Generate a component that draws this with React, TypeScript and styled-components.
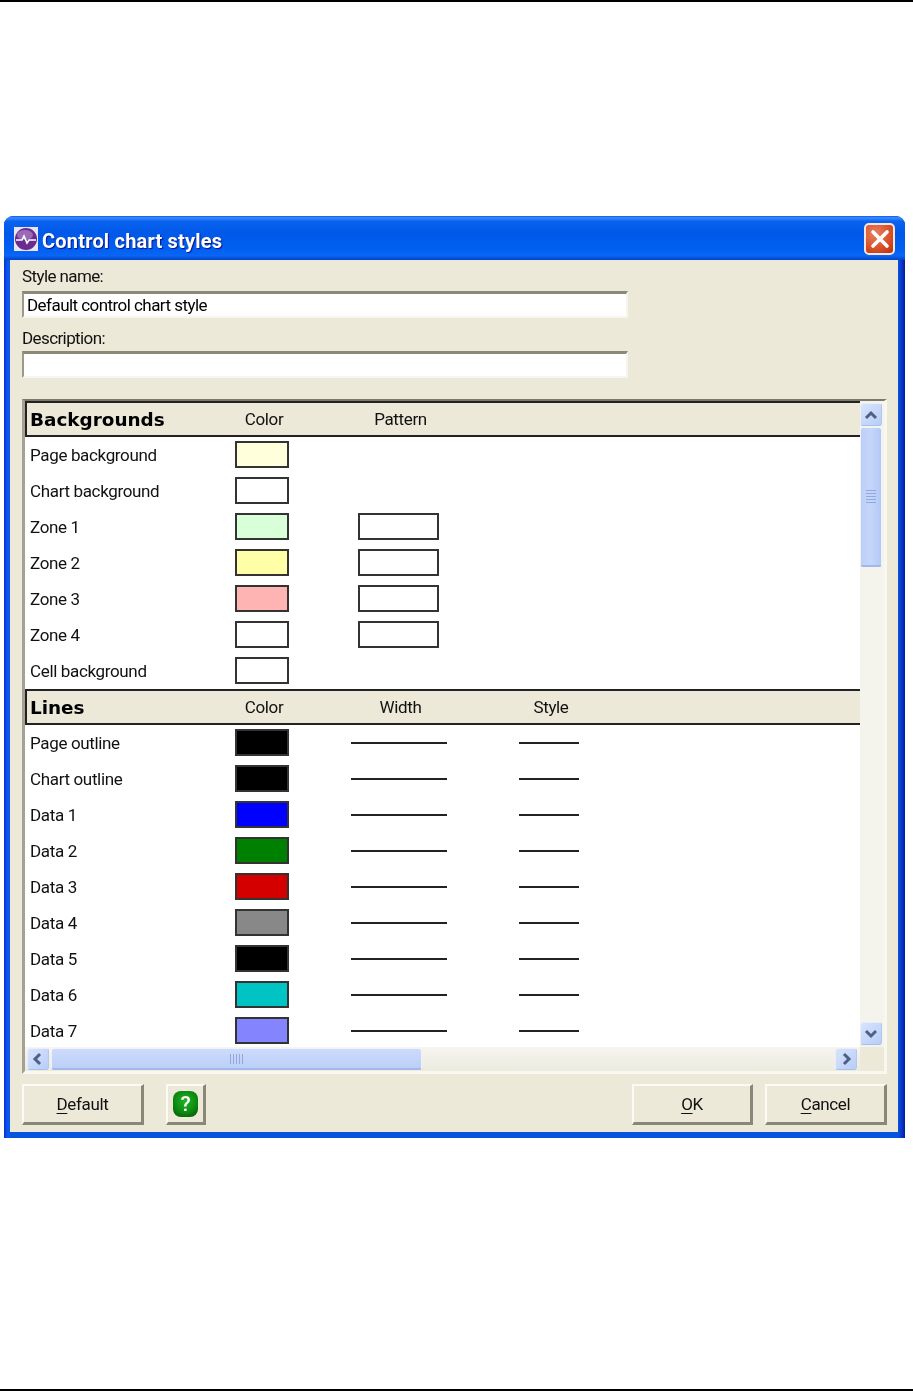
import React from "react";
import styled, { createGlobalStyle } from "styled-components";

const Global = createGlobalStyle`
  html, body { margin: 0; padding: 0; background: #fff; }
  * { box-sizing: border-box; }
`;

const Page = styled.div`
  width: 913px;
  height: 1391px;
  border-top: 2px solid #000;
  border-bottom: 2px solid #000;
  padding: 214px 8px 0 4px;
  font-family: Roboto, "Liberation Sans", Arial, sans-serif;
  letter-spacing: -0.35px;
`;

const Win = styled.div`
  width: 901px;
  height: 922px;
  border-radius: 9px 9px 0 0;
  display: flex;
  flex-direction: column;
  filter: blur(0.45px);
  background: linear-gradient(90deg, #0831d9 0, #0a5cf0 4px, #0855dd 6px, #0855dd calc(100% - 7px), #0a3bd0 calc(100% - 4px), #001ea0 100%);
`;

const TitleBar = styled.div`
  height: 44px;
  flex: none;
  display: flex;
  align-items: center;
  padding: 0 10px 0 10px;
  border-radius: 9px 9px 0 0;
  background: linear-gradient(180deg, #0a5ae8 0, #3c8cff 4%, #0a62f0 12%, #0058e8 40%, #0060f2 75%, #0a66f4 90%, #0044c8 100%);
`;

const AppIcon = styled.svg`
  width: 24px;
  height: 24px;
  flex: none;
  margin: 2px 4px 0 0;
`;

const Title = styled.div`
  flex: 1;
  color: #fff;
  font-weight: 700;
  font-size: 20px;
  padding-top: 6px;
  letter-spacing: 0.2px;
  text-shadow: 1px 1px 1px #0f1089;
  font-family: Roboto, "Liberation Sans", Arial, sans-serif;
`;

const CloseBtn = styled.div`
  width: 31px;
  height: 32px;
  margin-top: 2px;
  border: 2px solid #f4e6e0;
  border-radius: 5px;
  background: radial-gradient(circle at 35% 30%, #e8805e 0, #d9532c 55%, #b8300c 100%);
  display: flex;
  align-items: center;
  justify-content: center;
`;

const Body = styled.div`
  flex: 1;
  margin: 0 7px 6px 6px;
  background: #ece9d8;
  padding: 0 11px 7px 12px;
  display: flex;
  flex-direction: column;
`;

const FieldLabel = styled.div<{ $h: number; $pb: number }>`
  height: ${(p) => p.$h}px;
  font-size: 17px;
  letter-spacing: -0.6px;
  color: #111;
  padding-bottom: ${(p) => p.$pb}px;
  display: flex;
  align-items: flex-end;
  line-height: 1;
`;

const TextField = styled.div`
  width: 606px;
  height: 27px;
  background: #fff;
  border-top: 3px solid #8c8978;
  border-left: 2px solid #9d9a8a;
  border-right: 2px solid #f6f5ee;
  border-bottom: 2px solid #f6f5ee;
  font-size: 17px;
  letter-spacing: -0.55px;
  color: #000;
  line-height: 22px;
  padding-left: 3px;
  white-space: nowrap;
`;

const Panel = styled.div`
  margin-top: 21px;
  height: 675px;
  border-top: 2px solid #7c7a6a;
  border-left: 3px solid #a5a294;
  border-right: 3px solid #f8f7f0;
  border-bottom: 3px solid #f8f7f0;
  display: flex;
  flex-direction: column;
`;

const PanelTop = styled.div`
  display: flex;
  height: 646px;
`;

const Table = styled.div`
  width: 835px;
  height: 646px;
  overflow: hidden;
  background: #fff;
  color: #111;
`;

const cols = "205px 64px 209px 92px";

const HeaderRow = styled.div`
  height: 36px;
  display: grid;
  grid-template-columns: ${cols};
  align-items: center;
  justify-items: center;
  background: #ece9d8;
  border-top: 2px solid #222;
  border-bottom: 2px solid #222;
  border-left: 2px solid #222;
  font-size: 17px;
`;

const HeaderTitle = styled.div`
  justify-self: start;
  padding-left: 3px;
  font-family: "DejaVu Sans", sans-serif;
  font-weight: 700;
  font-size: 18.4px;
  letter-spacing: 0;
  color: #000;
`;

const Row = styled.div`
  height: 36px;
  display: grid;
  grid-template-columns: ${cols};
  align-items: center;
  justify-items: center;
  font-size: 17px;
`;

const RowLabel = styled.div`
  justify-self: start;
  padding-left: 5px;
`;

const Swatch = styled.div<{ $c: string }>`
  width: 54px;
  height: 27px;
  margin-top: -1px;
  background: ${(p) => p.$c};
  border: 2px solid #333;
`;

const PatternBox = styled.div`
  width: 81px;
  height: 27px;
  margin-top: -1px;
  background: #fff;
  border: 2px solid #333;
`;

const Stroke = styled.div<{ $w: number }>`
  width: ${(p) => p.$w}px;
  height: 2px;
  background: #222;
`;

const VTrack = styled.div`
  width: 24px;
  height: 646px;
  background: #f4f3ec;
  padding: 2px 2px 2px 0;
  display: flex;
  flex-direction: column;
  justify-content: space-between;
`;

const ThumbGroup = styled.div`
  display: flex;
  flex-direction: column;
  gap: 1px;
`;

const ScrollBtn = styled.div<{ $w: number; $h: number }>`
  width: ${(p) => p.$w}px;
  height: ${(p) => p.$h}px;
  flex: none;
  border-radius: 3px;
  border: 1px solid #e8eefc;
  border-bottom-color: #a8bfe8;
  border-right-color: #b4c8ee;
  background: linear-gradient(135deg, #d8e4fc, #b8cdf8);
  display: flex;
  align-items: center;
  justify-content: center;
`;

const VThumb = styled.div`
  width: 22px;
  height: 140px;
  border-radius: 3px;
  border: 1px solid #eef2fd;
  border-bottom: 2px solid #a0b8ea;
  background: linear-gradient(90deg, #bccff8, #c6d6fa 50%, #b2c8f6);
  display: flex;
  flex-direction: column;
  align-items: center;
  justify-content: center;
  gap: 2px;
`;

const VGrip = styled.i`
  display: block;
  width: 10px;
  height: 1px;
  background: #8fa8e0;
`;

const HTrack = styled.div`
  display: flex;
  height: 24px;
  background: #ece9d8;
`;

const HBar = styled.div`
  width: 835px;
  height: 24px;
  background: linear-gradient(180deg, #f6f5ef, #ecebe0);
  padding: 0 3px 0 2px;
  display: flex;
  align-items: center;
  justify-content: space-between;
`;

const HLeft = styled.div`
  display: flex;
  gap: 2px;
`;

const HThumb = styled.div`
  width: 371px;
  height: 22px;
  border-radius: 3px;
  border: 1px solid #eef2fd;
  border-bottom: 2px solid #a0b8ea;
  background: linear-gradient(180deg, #cddbfb, #bccff8);
  display: flex;
  align-items: center;
  justify-content: center;
  gap: 2px;
`;

const HGrip = styled.i`
  display: block;
  width: 1px;
  height: 10px;
  background: #8fa8e0;
`;

const Footer = styled.div`
  margin-top: 10px;
  display: flex;
  justify-content: space-between;
`;

const FooterGroup = styled.div<{ $gap: number }>`
  display: flex;
  gap: ${(p) => p.$gap}px;
`;

const Btn = styled.div<{ $w: number }>`
  width: ${(p) => p.$w}px;
  height: 41px;
  background: #ece9d8;
  border-top: 2px solid #fbfaf5;
  border-left: 2px solid #fbfaf5;
  border-right: 3px solid #8a8778;
  border-bottom: 3px solid #8a8778;
  display: flex;
  align-items: center;
  justify-content: center;
  font-size: 17px;
  color: #111;
`;

const Mnemonic = styled.span`
  text-decoration: underline;
  text-underline-offset: 3px;
`;

const HelpIcon = styled.div`
  width: 25px;
  height: 26px;
  border-radius: 8px;
  background: radial-gradient(circle at 50% 40%, #22b526 0, #0c8a10 55%, #024d06 100%);
  color: #fff;
  font-weight: 500;
  font-size: 21px;
  line-height: 26px;
  text-align: center;
`;

const Chevron = ({ d }: { d: string }) => (
  <svg width="16" height="14" viewBox="0 0 16 14">
    <path d={d} fill="none" stroke="#4d6185" strokeWidth="3" />
  </svg>
);

const bgRows: [string, string, boolean][] = [
  ["Page background", "#ffffdc", false],
  ["Chart background", "#ffffff", false],
  ["Zone 1", "#d9ffd9", true],
  ["Zone 2", "#ffffa8", true],
  ["Zone 3", "#ffb4b4", true],
  ["Zone 4", "#ffffff", true],
  ["Cell background", "#ffffff", false],
];

const lineRows: [string, string][] = [
  ["Page outline", "#000000"],
  ["Chart outline", "#000000"],
  ["Data 1", "#0000ff"],
  ["Data 2", "#008000"],
  ["Data 3", "#d40000"],
  ["Data 4", "#888888"],
  ["Data 5", "#000000"],
  ["Data 6", "#00c4c4"],
  ["Data 7", "#8484ff"],
];

const grips = [0, 1, 2, 3, 4];

export default function App() {
  return (
    <Page>
      <Global />
      <Win>
        <TitleBar>
          <AppIcon viewBox="0 0 24 24">
            <rect width="24" height="24" fill="#e8e4f0" />
            <circle cx="12" cy="12" r="11" fill="#6a2c8e" />
            <ellipse cx="11" cy="8" rx="8" ry="5" fill="#9a6ab8" />
            <path d="M2 13h6l2-4 3 7 2-3h7" fill="none" stroke="#fff" strokeWidth="1.6" />
          </AppIcon>
          <Title>Control chart styles</Title>
          <CloseBtn>
            <svg width="20" height="20" viewBox="0 0 20 20">
              <path d="M3 3l14 14M17 3L3 17" stroke="#fff" strokeWidth="3.6" strokeLinecap="round" />
            </svg>
          </CloseBtn>
        </TitleBar>
        <Body>
          <FieldLabel $h={31} $pb={6}>Style name:</FieldLabel>
          <TextField>Default control chart style</TextField>
          <FieldLabel $h={33} $pb={4}>Description:</FieldLabel>
          <TextField />
          <Panel>
            <PanelTop>
              <Table>
                <HeaderRow>
                  <HeaderTitle>Backgrounds</HeaderTitle>
                  <span>Color</span>
                  <span>Pattern</span>
                </HeaderRow>
                {bgRows.map(([label, color, pattern]) => (
                  <Row key={label}>
                    <RowLabel>{label}</RowLabel>
                    <Swatch $c={color} />
                    {pattern && <PatternBox />}
                  </Row>
                ))}
                <HeaderRow>
                  <HeaderTitle>Lines</HeaderTitle>
                  <span>Color</span>
                  <span>Width</span>
                  <span>Style</span>
                </HeaderRow>
                {lineRows.map(([label, color]) => (
                  <Row key={label}>
                    <RowLabel>{label}</RowLabel>
                    <Swatch $c={color} />
                    <Stroke $w={96} />
                    <Stroke $w={60} />
                  </Row>
                ))}
              </Table>
              <VTrack>
                <ThumbGroup>
                  <ScrollBtn $w={22} $h={23}>
                    <Chevron d="M3 10l5-5 5 5" />
                  </ScrollBtn>
                  <VThumb>
                    {grips.map((g) => (
                      <VGrip key={g} />
                    ))}
                  </VThumb>
                </ThumbGroup>
                <ScrollBtn $w={22} $h={23}>
                  <Chevron d="M3 4l5 5 5-5" />
                </ScrollBtn>
              </VTrack>
            </PanelTop>
            <HTrack>
              <HBar>
                <HLeft>
                  <ScrollBtn $w={22} $h={22}>
                    <Chevron d="M10 2L5 7l5 5" />
                  </ScrollBtn>
                  <HThumb>
                    {grips.map((g) => (
                      <HGrip key={g} />
                    ))}
                  </HThumb>
                </HLeft>
                <ScrollBtn $w={22} $h={22}>
                  <Chevron d="M6 2l5 5-5 5" />
                </ScrollBtn>
              </HBar>
            </HTrack>
          </Panel>
          <Footer>
            <FooterGroup $gap={22}>
              <Btn $w={122}>
                <span>
                  <Mnemonic>D</Mnemonic>efault
                </span>
              </Btn>
              <Btn $w={40}>
                <HelpIcon>?</HelpIcon>
              </Btn>
            </FooterGroup>
            <FooterGroup $gap={12}>
              <Btn $w={121}>
                <span>
                  <Mnemonic>O</Mnemonic>K
                </span>
              </Btn>
              <Btn $w={122}>
                <span>
                  <Mnemonic>C</Mnemonic>ancel
                </span>
              </Btn>
            </FooterGroup>
          </Footer>
        </Body>
      </Win>
    </Page>
  );
}
